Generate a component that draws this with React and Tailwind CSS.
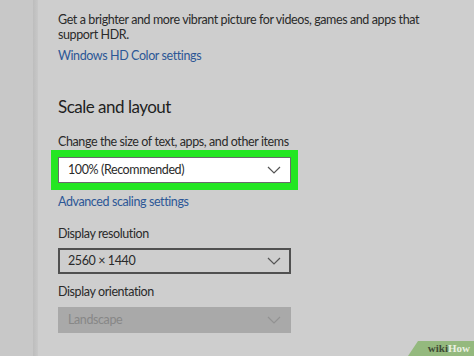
import React from 'react';

const Chevron = ({ className }) => (
  <svg width="14" height="8" viewBox="0 0 14 8" className={className} fill="none">
    <path d="M1 1l6 6 6-6" stroke="currentColor" strokeWidth="1.2" />
  </svg>
);

export default function App() {
  return (
    <div className="relative w-[474px] h-[356px] overflow-hidden bg-[#cecece] flex font-['Lato',sans-serif] text-[12.5px] tracking-[-0.4px]">
      <div className="w-[33px] shrink-0 bg-[#c8c8c8]" />
      <div className="w-[5px] shrink-0 bg-gradient-to-r from-[#bdbdbd] to-[#c8c8c8]" />
      <div className="flex-1 pl-[20px] pt-[12px] text-[#2a2a2a]">
        <p className="leading-[15px] w-[385px]">
          Get a brighter and more vibrant picture for videos, games and apps that support HDR.
        </p>
        <p className="mt-[6px] leading-[15px] text-[#2c5796]">Windows HD Color settings</p>

        <h2 className="mt-[32px] text-[17px] tracking-[-0.5px] leading-[24px] text-[#1f1f1f]">Scale and layout</h2>

        <p className="mt-[15px] leading-[16px]">Change the size of text, apps, and other items</p>
        <div className="-ml-[7px] w-[247px] border-[7px] border-[#24e622]">
          <div className="h-[26px] bg-white border border-[#6a6a6a] flex items-center justify-between pl-[9px] pr-[9px]">
            <span>100% (Recommended)</span>
            <Chevron className="text-[#555]" />
          </div>
        </div>
        <p className="mt-[3px] leading-[17px] text-[#2c5796]">Advanced scaling settings</p>

        <p className="mt-[15px] leading-[17px]">Display resolution</p>
        <div className="mt-[6px] w-[233px] h-[26px] border-2 border-[#505050] flex items-center justify-between pl-[8px] pr-[8px]">
          <span>2560 × 1440</span>
          <Chevron className="text-[#555]" />
        </div>

        <p className="mt-[9px] leading-[17px]">Display orientation</p>
        <div className="mt-[7px] w-[233px] h-[26px] bg-[#a9a9a9] flex items-center justify-between pl-[10px] pr-[10px] text-[#878787]">
          <span>Landscape</span>
          <Chevron className="text-[#929292]" />
        </div>
      </div>

      <div className="absolute right-0 bottom-0 w-[66px] h-[15px] bg-[#94b97e] [clip-path:polygon(10px_0,100%_0,100%_100%,0_100%)] flex items-center justify-end pr-[4px] font-['Liberation_Serif',serif] font-bold text-[11px] tracking-normal leading-none">
        <span className="text-[#3f4a36]">wiki</span>
        <span className="text-[#e9f0e2]">How</span>
      </div>
    </div>
  );
}
